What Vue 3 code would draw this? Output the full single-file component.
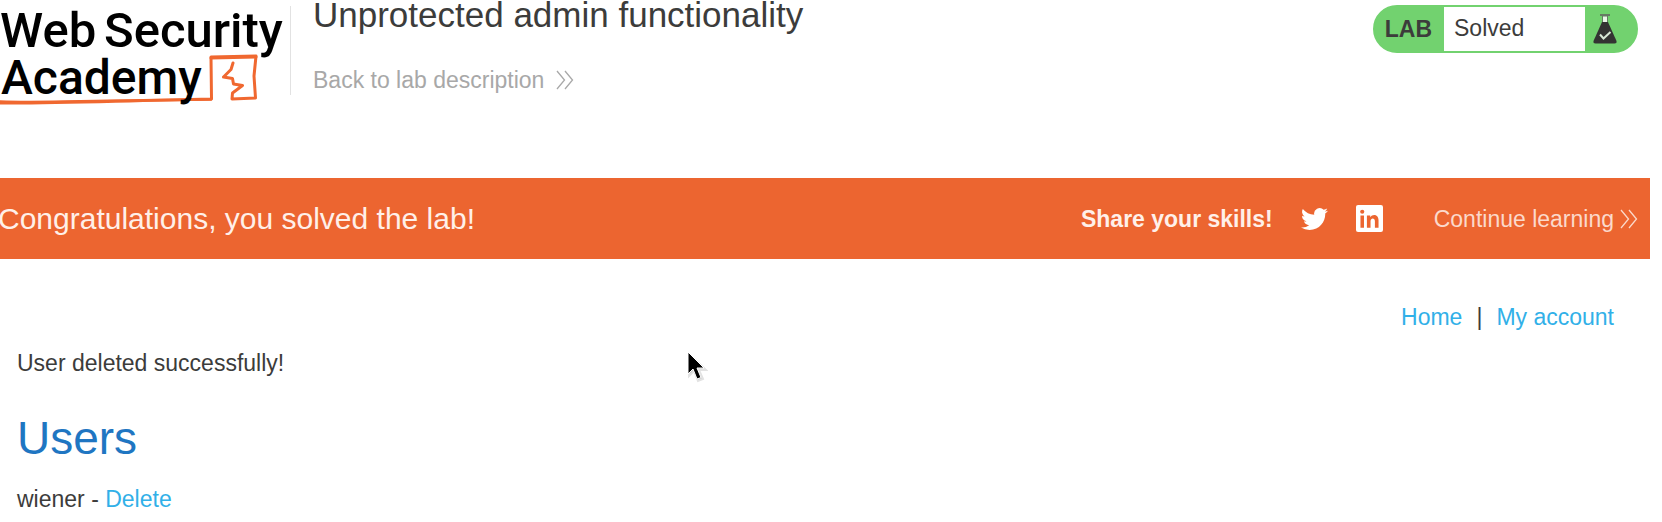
<script setup>
const users = ['wiener']
</script>

<template>
  <div class="page">
    <header class="top">
      <svg class="logo" viewBox="0 0 290 108" role="img" aria-label="Web Security Academy">
        <g class="orange">
          <path d="M0 101.500C45 103 86 100.500 130 100.500L211 99.500" stroke-width="2.500" />
          <path d="M0 103C60 103.500 108 101 211.500 99L211 57L256 56L254 76L255.500 98L232 99L232.500 93L242.500 85.500L233.500 84L232.500 78.500L223.500 77L231 69.500L233 63" stroke-width="3" />
          <path d="M211 58L256 57" stroke-width="3" />
        </g>
        <text x="0" y="47">Web</text>
        <text x="104" y="47">Security</text>
        <text class="second" x="1" y="94">Academy</text>
      </svg>
      <div class="intro">
        <h1>Unprotected admin functionality</h1>
        <a class="back" href="#">
          Back to lab description
          <svg class="chev" viewBox="0 0 18 20" aria-hidden="true"><path d="M1 1L8.500 10L1 19M9 1L16.500 10L9 19" /></svg>
        </a>
      </div>
      <div class="status">
        <strong>LAB</strong>
        <span class="state">Solved</span>
        <svg class="flask" viewBox="0 0 24 30" aria-hidden="true">
          <path d="M7 1H17" stroke="#667b64" stroke-width="2" />
          <path d="M9.500 2H14.500V9H9.500Z" fill="#eaf7e8" stroke="#667b64" />
          <path d="M9 8H15L23.500 27Q24 29.500 21.500 29.500H2.500Q0 29.500 .5 27Z" fill="#333332" />
          <path d="M7 20.500L10.500 24.500L17.500 18" fill="none" stroke="#d7e6d5" stroke-width="2" />
        </svg>
      </div>
    </header>

    <section class="banner">
      <p class="congrats">Congratulations, you solved the lab!</p>
      <div class="share">
        <strong>Share your skills!</strong>
        <a href="#" aria-label="Twitter">
          <svg class="bird" viewBox="0 2 24 20"><path d="M23.950 4.570a10 10 0 0 1-2.820.77 4.960 4.960 0 0 0 2.160-2.720 9.900 9.900 0 0 1-3.120 1.190 4.920 4.920 0 0 0-8.380 4.480A13.930 13.930 0 0 1 1.640 3.160a4.920 4.920 0 0 0 1.520 6.570 4.900 4.900 0 0 1-2.230-.61v.06a4.920 4.920 0 0 0 3.950 4.830 5 5 0 0 1-2.210.08 4.940 4.940 0 0 0 4.600 3.420A9.870 9.870 0 0 1 0 19.540a13.990 13.990 0 0 0 7.550 2.210c9.050 0 14-7.500 14-13.980 0-.21 0-.42-.02-.63a9.940 9.940 0 0 0 2.460-2.550z" /></svg>
        </a>
        <a href="#" aria-label="LinkedIn">
          <svg class="linked" viewBox="0 0 26 26">
            <rect width="26" height="26" rx="2" />
            <g class="cut">
              <circle cx="6" cy="6.500" r="2" />
              <path d="M4.300 10H7.700V22H4.300ZM10.500 10H13.700V11.700C16 8.500 21.700 9 21.700 14.800V22H18.200V15.700C18.200 12 14 12.300 14 15.700V22H10.500Z" />
            </g>
          </svg>
        </a>
      </div>
      <a class="continue" href="#">
        Continue learning
        <svg class="chev" viewBox="0 0 18 20" aria-hidden="true"><path d="M1 1L8.500 10L1 19M9 1L16.500 10L9 19" /></svg>
      </a>
    </section>

    <main>
      <nav><a href="#">Home</a><span>|</span><a href="#">My account</a></nav>
      <p class="message">User deleted successfully!</p>
      <h2>Users</h2>
      <p v-for="user in users" :key="user">{{ user }} - <a href="#">Delete</a></p>
    </main>

    <svg class="pointer" viewBox="0 0 22 34" aria-hidden="true">
      <path class="shade" d="M3 3V25L8 20L12 30L17 28L13 19H20Z" />
      <path d="M2 1V23L7 18L11 28L15 26.500L11 17H18Z" />
    </svg>
  </div>
</template>

<style>
body {
  background: #fff;
  overflow-x: hidden;
}
</style>

<style scoped>
.page {
  position: relative;
  margin-right: 12px;
  color: #3c3c3b;
  font: 23px/28px "Liberation Sans", Arial, sans-serif;
}
h1, h2, p {
  margin: 0;
  font-weight: 400;
}
a {
  color: #31b0e8;
  text-decoration: none;
}
svg {
  display: block;
  flex: none;
}
.top {
  display: flex;
  align-items: flex-start;
  min-height: 178px;
  padding-right: 12px;
  box-sizing: border-box;
}
.logo {
  width: 290px;
  height: 108px;
  font-family: Roboto, sans-serif;
  font-size: 49px;
  font-weight: 500;
}
.second {
  font-size: 48px;
}
.orange {
  fill: none;
  stroke: #f06830;
  stroke-linejoin: round;
  stroke-linecap: round;
}
.intro {
  flex: 1;
  position: relative;
  padding-left: 23px;
}
.intro::before {
  content: "";
  position: absolute;
  left: 0;
  top: 6px;
  height: 89px;
  border-left: 1px solid #e2e2e2;
}
h1 {
  font-size: 35px;
  line-height: 30px;
}
.back {
  display: flex;
  align-items: center;
  gap: 12px;
  margin-top: 36px;
  color: #a8a8a8;
}
.chev {
  width: 18px;
  height: 20px;
  fill: none;
  stroke: currentColor;
  stroke-width: 1.3;
}
.status {
  display: flex;
  align-items: stretch;
  margin-top: 5px;
  border: 2px solid #72d26f;
  border-radius: 24px;
  background: #72d26f;
  line-height: 43px;
}
.status strong {
  padding: 1px 12px 0 10px;
}
.state {
  width: 131px;
  padding-left: 10px;
  background: #fff;
}
.flask {
  width: 24px;
  height: 30px;
  margin: 7px 19px 0 8px;
}
.banner {
  display: flex;
  align-items: center;
  min-height: 81px;
  padding-right: 12px;
  background: #ec6530;
  color: #fff0e9;
}
.congrats {
  flex: 1;
  margin-left: -2px;
  font-size: 30px;
  line-height: 36px;
}
.share {
  display: flex;
  align-items: center;
  gap: 28px;
  margin-right: 51px;
}
.bird {
  width: 27px;
  height: 24px;
  fill: #fff;
}
.linked {
  width: 27px;
  height: 27px;
  fill: #fff;
}
.cut {
  fill: #ec6530;
}
.continue {
  display: flex;
  align-items: center;
  gap: 6px;
  color: #fbd9cb;
}
main {
  padding: 44px 36px 8px 17px;
}
nav {
  display: flex;
  justify-content: flex-end;
  gap: 14px;
}
.message {
  margin-top: 18px;
}
h2 {
  margin: 35px 0 21px;
  color: #1f76c2;
  font-size: 46px;
  line-height: 52px;
}
.pointer {
  position: absolute;
  left: 686px;
  top: 351px;
  width: 22px;
  height: 34px;
  stroke: #fff;
  stroke-width: 1;
}
.shade {
  fill: #c8c8c8;
  stroke: #e2e2e2;
  stroke-width: 2;
}
</style>
